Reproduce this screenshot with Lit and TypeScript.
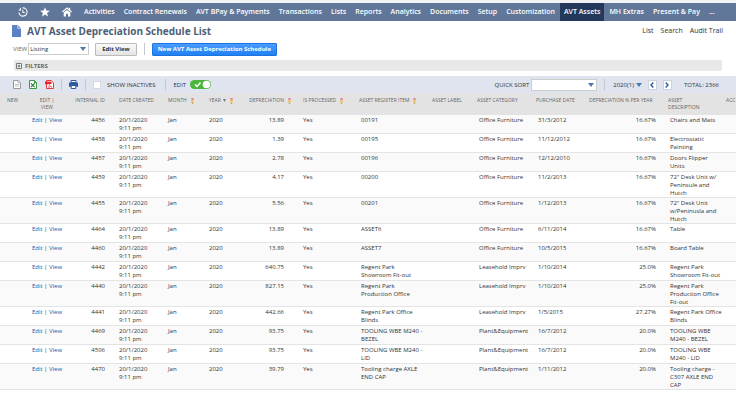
import { LitElement, html, css, svg, nothing } from "lit";
import { customElement } from "lit/decorators.js";
import { classMap } from "lit/directives/class-map.js";

interface Asset {
  id: string;
  amount: string;
  item: string;
  category: string;
  purchased: string;
  percent: string;
  description: string;
}

const asset = (
  id: string,
  amount: string,
  item: string,
  category: string,
  purchased: string,
  percent: string,
  description: string
): Asset => ({ id, amount, item, category, purchased, percent, description });

const ASSETS: Asset[] = [
  asset("4456", "13.89", "00191", "Office Furniture", "31/3/2012", "16.67%", "Chairs and Mats"),
  asset("4458", "1.39", "00195", "Office Furniture", "11/12/2012", "16.67%", "Electrostatic\nPainting"),
  asset("4457", "2.78", "00196", "Office Furniture", "12/12/2010", "16.67%", "Doors Flipper\nUnits"),
  asset("4459", "4.17", "00200", "Office Furniture", "11/2/2013", "16.67%", '72" Desk Unit w/\nPeninsule and\nHutch'),
  asset("4455", "5.56", "00201", "Office Furniture", "1/12/2013", "16.67%", '72" Desk Unit\nw/Peninusla and\nHutch'),
  asset("4464", "13.89", "ASSET6", "Office Furniture", "6/11/2014", "16.67%", "Table"),
  asset("4460", "13.89", "ASSET7", "Office Furniture", "10/5/2015", "16.67%", "Board Table"),
  asset("4442", "640.75", "Regent Park\nShowroom Fit-out", "Leasehold Imprv", "1/10/2014", "25.0%", "Regent Park\nShowroom Fit-out"),
  asset("4440", "827.15", "Regent Park\nProduction Office", "Leasehold Imprv", "1/10/2014", "25.0%", "Regent Park\nProduction Office\nFit-out"),
  asset("4441", "442.66", "Regent Park Office\nBlinds", "Leasehold Imprv", "1/5/2015", "27.27%", "Regent Park Office\nBlinds"),
  asset("4469", "93.75", "TOOLING WBE M240 -\nBEZEL", "Plant&Equipment", "16/7/2012", "20.0%", "TOOLING WBE\nM240 - BEZEL"),
  asset("4506", "93.75", "TOOLING WBE M240 -\nLID", "Plant&Equipment", "16/7/2012", "20.0%", "TOOLING WBE\nM240 - LID"),
  asset("4470", "39.79", "Tooling charge AXLE\nEND CAP", "Plant&Equipment", "1/11/2012", "20.0%", "Tooling charge -\nC307 AXLE END\nCAP"),
];

const MENU = [
  "Activities", "Contract Renewals", "AVT BPay & Payments", "Transactions", "Lists", "Reports", "Analytics",
  "Documents", "Setup", "Customization", "AVT Assets", "MH Extras", "Present & Pay", "...",
];

const COLUMNS = [
  { key: "new", title: "NEW", edit: false },
  { key: "actions", title: "EDIT |\nVIEW", edit: false },
  { key: "id", title: "INTERNAL ID", edit: false },
  { key: "created", title: "DATE CREATED", edit: false },
  { key: "month", title: "MONTH", edit: true },
  { key: "year", title: "YEAR", edit: true },
  { key: "amount", title: "DEPRECIATION", edit: true },
  { key: "processed", title: "IS PROCESSED", edit: true },
  { key: "item", title: "ASSET REGISTER ITEM", edit: true },
  { key: "label", title: "ASSET LABEL", edit: false },
  { key: "category", title: "ASSET CATEGORY", edit: false },
  { key: "purchased", title: "PURCHASE DATE", edit: false },
  { key: "percent", title: "DEPRECIATION % PER YEAR", edit: false },
  { key: "description", title: "ASSET\nDESCRIPTION", edit: false },
  { key: "account", title: "ACC", edit: false },
];

const icon = (name: string, w: number, h: number, body: unknown) =>
  html`<svg class="icon ${name}" width=${w} height=${h} viewBox="0 0 ${w} ${h}" aria-hidden="true">${body}</svg>`;

const clockIcon = icon("clock", 10, 10, svg`
  <path d="M4.600.9A4.100 4.100 0 1 1 .9 5.500" fill="none" stroke="#fff" stroke-width="1.100"/>
  <path d="M3 .6v2.800H.4z" fill="#fff"/><path d="M4.800 2.800v2.700h2" fill="none" stroke="#fff"/>`);
const starIcon = icon("star", 10, 10, svg`
  <path d="M5 .2l1.300 3.300 3.600.2-2.800 2.200.9 3.600-3-2-3 2 .9-3.600L.1 3.700l3.600-.2z" fill="#fff"/>`);
const homeIcon = icon("home", 10, 10, svg`
  <path d="M.4 5L5 1l4.600 4M7.600 3V.8" fill="none" stroke="#fff" stroke-width="1.100"/>
  <path d="M1.700 5.600L5 2.900l3.300 2.700v4H6V6.800H4v2.800H1.700z" fill="#fff"/>`);
const recordIcon = icon("record", 9, 12, svg`
  <path d="M0 0h5.500v3.500H9V12H0z" fill="#5b82c4"/><path d="M6 0l3 3H6z" fill="#8ea8d4"/>`);
const pencilIcon = icon("pencil", 3, 6, svg`
  <path d="M.3 1.600h2.400v2.800L1.500 6 .3 4.400z" fill="#efc06a"/><path d="M.3 0h2.400v1.700H.3z" fill="#d9829a"/>
  <path d="M1 5l.5 1 .5-1z" fill="#666"/>`);
const csvIcon = icon("csv", 8, 9, svg`
  <path d="M.5.5h4.700l2.300 2.300v5.700h-7z" fill="#fff" stroke="#999"/><path d="M5 .8V3h2.300M2 4.500h4M2 6h4" fill="none" stroke="#aaa" stroke-width=".7"/>`);
const xlsIcon = icon("xls", 8, 9, svg`
  <path d="M.5.5h4.700l2.300 2.300v5.700h-7z" fill="#fff" stroke="#3a9a45"/><path d="M5 0l3 3H5z" fill="#3a9a45"/>
  <path d="M2 3.400l3.600 3.800M5.600 3.400L2 7.200" stroke="#23852f" stroke-width="1.200"/>`);
const pdfIcon = icon("pdf", 9, 9, svg`
  <path d="M1.500.5h4.700l2.300 2.300v5.700h-7z" fill="#fff" stroke="#e23a3f"/><path d="M0 1.600h6.500v2.600H0z" fill="#e8232a"/>
  <path d="M3.400 7.600c.5-1 1-2 1-2.800.4 1.400 1.400 2 2.800 2-1.500-.2-2.800.1-3.800.8z" fill="none" stroke="#e23a3f" stroke-width=".6"/>`);
const printIcon = icon("printer", 9, 9, svg`
  <path d="M2 .5h5v2H2z" fill="#fff" stroke="#2c5ba4"/><path d="M.8 2.600h7.400q.8 0 .8.8v3.400H0V3.400q0-.8.8-.8z" fill="#2c5ba4"/>
  <path d="M2.200 5.500h4.600v3H2.200z" fill="#fff" stroke="#2c5ba4"/>`);
const arrowIcon = icon("arrow", 6, 4, svg`<path d="M0 0h6L3 4z" fill="#4f76ad"/>`);
const sortIcon = icon("sort", 3, 3, svg`<path d="M0 0h3L1.500 3z" fill="#777"/>`);
const plusIcon = icon("plus", 6, 6, svg`
  <path d="M.5.5h5v5h-5z" fill="#fff" stroke="#777"/><path d="M3 1.500v3M1.500 3h3" stroke="#666"/>`);
const chevron = (d: string) =>
  icon("chevron", 4, 6, svg`<path d=${d} fill="none" stroke="#2c5ba4" stroke-width="1.400"/>`);

@customElement("app-root")
export class AppRoot extends LitElement {
  static styles = css`
    :host {
      display: block;
      min-height: 100vh;
      overflow: hidden;
      background: #fff;
      color: #333;
      font: 6px/8px "Open Sans", "Noto Sans", sans-serif;
    }
    * { box-sizing: border-box; }
    a { color: inherit; text-decoration: none; }
    button, select, input { margin: 0; font: inherit; color: inherit; }
    .icon { display: block; flex: none; }

    .menu {
      display: flex;
      align-items: stretch;
      gap: 1px;
      height: 21px;
      padding-left: 18px;
      border-top: 3px solid #f2f3f5;
      background: #607799;
      color: #fff;
      font-size: 7px;
      font-weight: 600;
      white-space: nowrap;
    }
    .menu a { display: flex; align-items: center; padding: 0 4px; }
    .shortcuts { display: flex; gap: 12px; margin-right: 7px; }
    .menu .shortcuts a { padding: 0; }
    .menu a.current { background: #24385b; }

    .heading { display: flex; align-items: center; height: 20px; padding: 0 13px 0 12px; }
    h1 { flex: 1; margin: 0 0 0 6px; font-size: 10px; line-height: 16px; font-weight: 700; color: #4d5f79; }
    .links { display: flex; gap: 7px; font-size: 7px; }

    .controls { display: flex; align-items: center; height: 16px; padding-left: 13px; }
    .caption { color: #666; }
    .field { display: grid; align-items: center; }
    .field > * { grid-area: 1 / 1; }
    .field .icon { justify-self: end; margin-right: 3px; pointer-events: none; }
    select {
      appearance: none;
      width: 100%;
      height: 12px;
      padding: 0 10px 0 1px;
      border: 1px solid #ccc;
      border-radius: 0;
      background: #fff;
    }
    .view { width: 61px; margin-left: 1px; }
    .action {
      height: 13px;
      padding: 0 6px;
      border: 1px solid #bbb;
      border-radius: 1px;
      background: linear-gradient(#fafafa, #e4e4e4);
      color: #333;
      font-weight: 700;
      white-space: nowrap;
    }
    .action.edit { margin-left: 6px; }
    .action.primary { padding: 0 5px; border-color: #1c74dc; background: linear-gradient(#4a9cff, #2180f3); color: #fff; }
    .rule { width: 1px; height: 12px; background: #c4c8cf; }
    .controls .rule { margin: 0 7px; }

    .filters {
      display: flex;
      align-items: center;
      height: 11px;
      margin: 3px 14px 5px;
      padding: 0 2px;
      border-radius: 2px;
      background: #e8e8e8;
    }
    .filters button {
      display: flex;
      align-items: center;
      gap: 3px;
      padding: 0;
      border: 0;
      background: none;
      font-weight: 700;
      color: #666;
    }

    .toolbar { display: flex; align-items: center; height: 17px; padding: 0 17px 0 13px; background: #dfe4ef; }
    .toolbar button { display: flex; align-items: center; justify-content: center; padding: 0; border: 0; background: none; }
    .exports { display: flex; gap: 8px; margin-right: 7px; }
    .print { margin: 0 7px; }
    .toolbar .print { margin: 0 7px; }
    .toggle { display: flex; align-items: center; gap: 6px; white-space: nowrap; }
    .inactive { margin: 0 10px 0 7px; }
    .inactive input { appearance: none; width: 8px; height: 8px; border: 1px solid #d4d8e0; background: #fff; }
    .live { gap: 4px; margin-left: 7px; }
    .switch { display: grid; align-items: center; }
    .switch > * { grid-area: 1 / 1; }
    .switch input { appearance: none; width: 21px; height: 9px; border-radius: 5px; background: #4cb53c; }
    .switch svg { pointer-events: none; }
    .spacer { flex: 1; }
    .quick { display: flex; align-items: center; gap: 2px; margin-right: 7px; }
    .quick .field { width: 66px; }
    .toolbar .range { gap: 2px; margin: 0 6px 0 8px; }
    .toolbar .step { width: 9px; height: 10px; border: 1px solid #ccd2de; background: #fff; }
    .toolbar .step + .step { margin-left: 6px; }
    .total { margin-left: 12px; }

    table { width: 100%; table-layout: fixed; border-collapse: separate; border-spacing: 0; }
    th, td { padding: 1px 0 0 4px; text-align: left; vertical-align: top; white-space: pre; }
    th { height: 22px; padding-top: 4px; background: #e3e3e3; color: #666; font-size: 5px; line-height: 7px; font-weight: 400; }
    td { height: 19px; border-bottom: 1px solid #e4e4e4; }
    tbody tr:nth-child(odd) { background: #fafafa; }
    tbody a { color: #2455a4; }
    .head { display: inline-flex; align-items: center; gap: 2px; }
    .head .pencil { margin-left: 2px; }

    col.new { width: 31px; }
    col.actions { width: 32px; }
    col.id { width: 52px; }
    col.created { width: 49px; }
    col.month { width: 41px; }
    col.year { width: 36px; }
    col.amount { width: 58px; }
    col.processed { width: 56px; }
    col.item { width: 73px; }
    col.label { width: 45px; }
    col.category { width: 59px; }
    col.purchased { width: 53px; }
    col.percent { width: 79px; }
    col.description { width: 61px; }
    col.account { width: 11px; }

    th.new { padding-left: 7px; }
    .actions { padding-left: 0; text-align: center; }
    .id { padding-right: 10px; text-align: right; }
    .amount { text-align: right; }
    th.amount { padding-right: 8px; }
    td.amount { padding-right: 15px; }
    td.item, td.category, td.purchased, td.description { padding-left: 6px; }
    td.percent { padding-right: 8px; text-align: right; }
    th.account { padding-left: 1px; }
  `;

  private renderRow(row: Asset) {
    return html`<tr>
      <td></td>
      <td class="actions"><a href="#edit">Edit</a> | <a href="#view">View</a></td>
      <td class="id">${row.id}</td>
      <td>${"20/1/2020\n9:11 pm"}</td>
      <td>Jan</td>
      <td>2020</td>
      <td class="amount">${row.amount}</td>
      <td>Yes</td>
      <td class="item">${row.item}</td>
      <td></td>
      <td class="category">${row.category}</td>
      <td class="purchased">${row.purchased}</td>
      <td class="percent">${row.percent}</td>
      <td class="description">${row.description}</td>
      <td></td>
    </tr>`;
  }

  render() {
    return html`
      <nav class="menu">
        <div class="shortcuts">
          <a href="#recent" aria-label="Recent records">${clockIcon}</a>
          <a href="#shortcuts" aria-label="Shortcuts">${starIcon}</a>
          <a href="#home" aria-label="Home">${homeIcon}</a>
        </div>
        ${MENU.map((m) => html`<a href="#menu" class=${classMap({ current: m === "AVT Assets" })}>${m}</a>`)}
      </nav>
      <header class="heading">
        ${recordIcon}
        <h1>AVT Asset Depreciation Schedule List</h1>
        <div class="links"><a href="#list">List</a><a href="#search">Search</a><a href="#audit">Audit Trail</a></div>
      </header>
      <div class="controls">
        <label class="caption" for="view">VIEW</label>
        <div class="field view"><select id="view"><option>Listing</option></select>${arrowIcon}</div>
        <button class="action edit">Edit View</button>
        <span class="rule"></span>
        <button class="action primary">New AVT Asset Depreciation Schedule</button>
      </div>
      <div class="filters"><button aria-expanded="false">${plusIcon}FILTERS</button></div>
      <div class="toolbar">
        <div class="exports">
          <button aria-label="Export CSV">${csvIcon}</button>
          <button aria-label="Export Excel">${xlsIcon}</button>
          <button aria-label="Export PDF">${pdfIcon}</button>
        </div>
        <span class="rule"></span>
        <button class="print" aria-label="Print">${printIcon}</button>
        <span class="rule"></span>
        <label class="toggle inactive"><input type="checkbox" />SHOW INACTIVES</label>
        <span class="rule"></span>
        <label class="toggle live">EDIT
          <span class="switch"><input type="checkbox" checked />
            <svg width="21" height="9" viewBox="0 0 21 9" aria-hidden="true">
              <path d="M5 4.500l2 2 3.500-4" fill="none" stroke="#fff" stroke-width="1.500"/>
              <circle cx="16.500" cy="4.500" r="3.800" fill="#fff"/>
            </svg>
          </span>
        </label>
        <span class="spacer"></span>
        <div class="quick">
          <label for="sort">QUICK SORT</label>
          <div class="field"><select id="sort"><option></option></select>${arrowIcon}</div>
        </div>
        <span class="rule"></span>
        <button class="range">2020(1) ${arrowIcon}</button>
        <button class="step" aria-label="Previous page">${chevron("M3.300.6L1 3l2.300 2.400")}</button>
        <button class="step" aria-label="Next page">${chevron("M.7.6L3 3 .7 5.400")}</button>
        <span class="total">TOTAL: 2366</span>
      </div>
      <table>
        <colgroup>${COLUMNS.map((c) => html`<col class=${c.key} />`)}</colgroup>
        <thead>
          <tr>${COLUMNS.map((c) => html`<th class=${c.key} scope="col"><span class="head">${c.title}${c.key === "year" ? sortIcon : nothing}${c.edit ? pencilIcon : nothing}</span></th>`)}</tr>
        </thead>
        <tbody>${ASSETS.map((row) => this.renderRow(row))}</tbody>
      </table>
    `;
  }
}
